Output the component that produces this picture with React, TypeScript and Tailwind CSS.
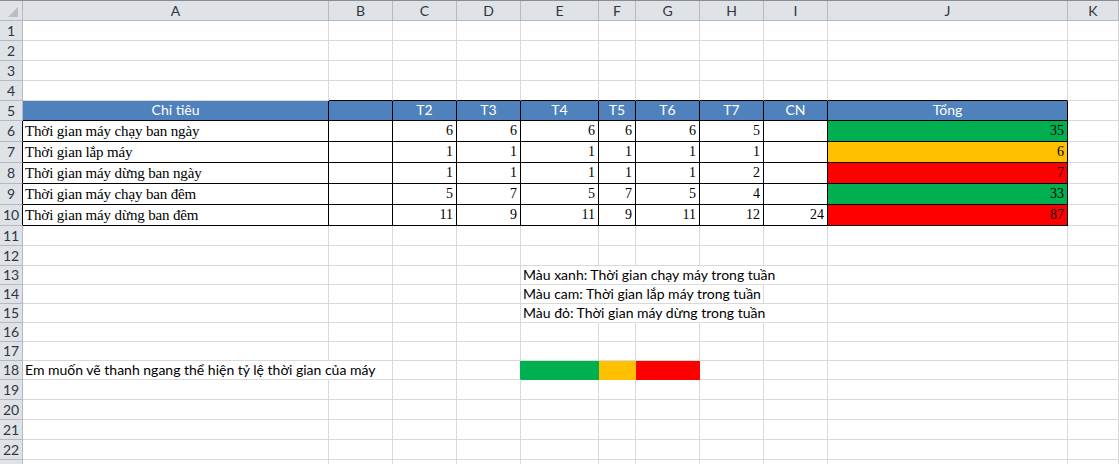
type Fill = "blue" | "green" | "orange" | "red" | "none";
type Line = "grid" | "black" | "hide" | "green" | "orange" | "red";

const COLS = ["A", "B", "C", "D", "E", "F", "G", "H", "I", "J", "K"];
const GRID = "grid grid-cols-[23px_306px_64px_64px_64px_78px_37px_64px_64px_64px_240px_1fr]";

const BG: Record<Fill, string> = {
  blue: "bg-[#4f81bd]",
  green: "bg-[#00b050]",
  orange: "bg-[#ffc000]",
  red: "bg-[#ff0000]",
  none: "",
};
const RB: Record<Line, string> = {
  grid: "border-r-[#d9d9d9]",
  black: "border-r-black",
  hide: "border-r-transparent",
  green: "border-r-[#00b050]",
  orange: "border-r-[#ffc000]",
  red: "border-r-[#ff0000]",
};
const BB: Record<Line, string> = {
  grid: "border-b-[#d9d9d9]",
  black: "border-b-black",
  hide: "border-b-transparent",
  green: "border-b-[#00b050]",
  orange: "border-b-[#ffc000]",
  red: "border-b-[#ff0000]",
};
const HEIGHT: Record<number, string> = {
  19: "h-[19px]",
  20: "h-[20px]",
  21: "h-[21px]",
};

type Cell = {
  text?: string;
  kind?: "label" | "num" | "head" | "calibri";
  fill?: Fill;
  right?: Line;
  bottom?: Line;
};

const labels = [
  "Thời gian máy chạy ban ngày",
  "Thời gian lắp máy",
  "Thời gian máy dừng ban ngày",
  "Thời gian máy chạy ban đêm",
  "Thời gian máy dừng ban đêm",
];
const nums: (number | null)[][] = [
  [6, 6, 6, 6, 6, 5, null],
  [1, 1, 1, 1, 1, 1, null],
  [1, 1, 1, 1, 1, 2, null],
  [5, 7, 5, 7, 5, 4, null],
  [11, 9, 11, 9, 11, 12, 24],
];
const totals: { v: number; fill: Fill }[] = [
  { v: 35, fill: "green" },
  { v: 6, fill: "orange" },
  { v: 7, fill: "red" },
  { v: 33, fill: "green" },
  { v: 87, fill: "red" },
];
const heads = ["", "T2", "T3", "T4", "T5", "T6", "T7", "CN", "Tổng"];

function rowHeight(r: number) {
  if (r >= 6 && r <= 10) return 21;
  if (r >= 13 && r <= 18) return 19;
  return 20;
}

function buildRow(r: number): Cell[] {
  const cells: Cell[] = COLS.map(() => ({ fill: "none", right: "grid", bottom: "grid" }));
  if (r === 4) {
    for (let c = 1; c <= 9; c++) cells[c].bottom = "black";
  }
  if (r === 5) {
    cells[0] = { text: "Chỉ tiêu", kind: "head", fill: "blue", right: "black", bottom: "black" };
    for (let c = 1; c <= 9; c++) {
      cells[c] = { text: heads[c - 1], kind: "head", fill: "blue", right: "black", bottom: "black" };
    }
  }
  if (r >= 6 && r <= 10) {
    const i = r - 6;
    cells[0] = { text: labels[i], kind: "label", fill: "none", right: "black", bottom: "black" };
    cells[1] = { fill: "none", right: "black", bottom: "black" };
    for (let c = 2; c <= 8; c++) {
      const v = nums[i][c - 2];
      cells[c] = { text: v === null ? "" : String(v), kind: "num", fill: "none", right: "black", bottom: "black" };
    }
    cells[9] = { text: String(totals[i].v), kind: "num", fill: totals[i].fill, right: "black", bottom: "black" };
  }
  if (r >= 13 && r <= 15) {
    const t = [
      "Màu xanh: Thời gian chạy máy trong tuần",
      "Màu cam: Thời gian lắp máy trong tuần",
      "Màu đỏ: Thời gian máy dừng trong tuần",
    ][r - 13];
    cells[4] = { text: t, kind: "calibri", fill: "none", right: "hide", bottom: "grid" };
    cells[5].right = "hide";
    cells[6].right = "hide";
    if (r !== 14) cells[7].right = "hide";
  }
  if (r === 18) {
    cells[0] = {
      text: "Em muốn vẽ thanh ngang thể hiện tỷ lệ thời gian của máy",
      kind: "calibri",
      fill: "none",
      right: "hide",
      bottom: "grid",
    };
    cells[3].right = "green";
    cells[4] = { fill: "green", right: "green", bottom: "green" };
    cells[5] = { fill: "orange", right: "orange", bottom: "orange" };
    cells[6] = { fill: "red", right: "red", bottom: "red" };
  }
  return cells;
}

function CellView({ cell }: { cell: Cell }) {
  const base = `border-r border-b ${RB[cell.right ?? "grid"]} ${BB[cell.bottom ?? "grid"]} ${BG[cell.fill ?? "none"]} min-w-0 flex items-end whitespace-nowrap overflow-visible`;
  let inner: React.ReactNode = null;
  if (cell.text) {
    if (cell.kind === "head") {
      inner = (
        <span className="w-full text-center text-white font-['Lato',sans-serif] text-[14px] leading-[18px] pb-[1px]">
          {cell.text}
        </span>
      );
    } else if (cell.kind === "label") {
      inner = (
        <span className="pl-[2px] text-black font-['Liberation_Serif',serif] text-[15px] tracking-[-0.15px] leading-[18px] pb-[1px]">
          {cell.text}
        </span>
      );
    } else if (cell.kind === "num") {
      inner = (
        <span className="w-full text-right pr-[3px] text-black font-['Liberation_Serif',serif] text-[14px] leading-[18px] pb-[1px]">
          {cell.text}
        </span>
      );
    } else {
      inner = (
        <span className="pl-[2px] text-black font-['Lato',sans-serif] text-[14px] leading-[18px] relative z-10">
          {cell.text}
        </span>
      );
    }
  }
  return <div className={base}>{inner}</div>;
}

function Corner() {
  return (
    <div className="border-r border-r-[#b5b9bf] border-b border-b-[#b5b9bf] bg-[#dfe3e8]">
      <svg width="22" height="19" viewBox="0 0 22 19" className="block">
        <polygon points="8,16 18,16 18,6" fill="#b9bec5" />
      </svg>
    </div>
  );
}

export default function App() {
  const rows = Array.from({ length: 23 }, (_, i) => i + 1);
  return (
    <div className="w-[1119px] h-[464px] overflow-hidden bg-white">
      <div className={`${GRID} h-[21px] border-t border-t-[#8c8c8c]`}>
        <Corner />
        {COLS.map((c) => (
          <div
            key={c}
            className="border-r border-r-[#b5b9bf] border-b border-b-[#b5b9bf] bg-[#dfe3e8] flex items-center justify-center text-[14px] text-[#2f3640] font-['Lato',sans-serif] leading-none"
          >
            {c}
          </div>
        ))}
      </div>
      {rows.map((r) => {
        const cells = buildRow(r);
        const h = rowHeight(r);
        const blackHeader = r >= 6 && r <= 10;
        return (
          <div key={r} className={`${GRID} ${HEIGHT[h]}`}>
            <div
              className={`border-r border-b border-b-[#b5b9bf] ${
                blackHeader ? "border-r-black" : "border-r-[#b5b9bf]"
              } bg-[#dfe3e8] flex items-center justify-center text-[14px] text-[#2f3640] font-['Lato',sans-serif] leading-none`}
            >
              {r <= 22 ? r : ""}
            </div>
            {cells.map((cell, i) => (
              <CellView key={i} cell={cell} />
            ))}
          </div>
        );
      })}
    </div>
  );
}
